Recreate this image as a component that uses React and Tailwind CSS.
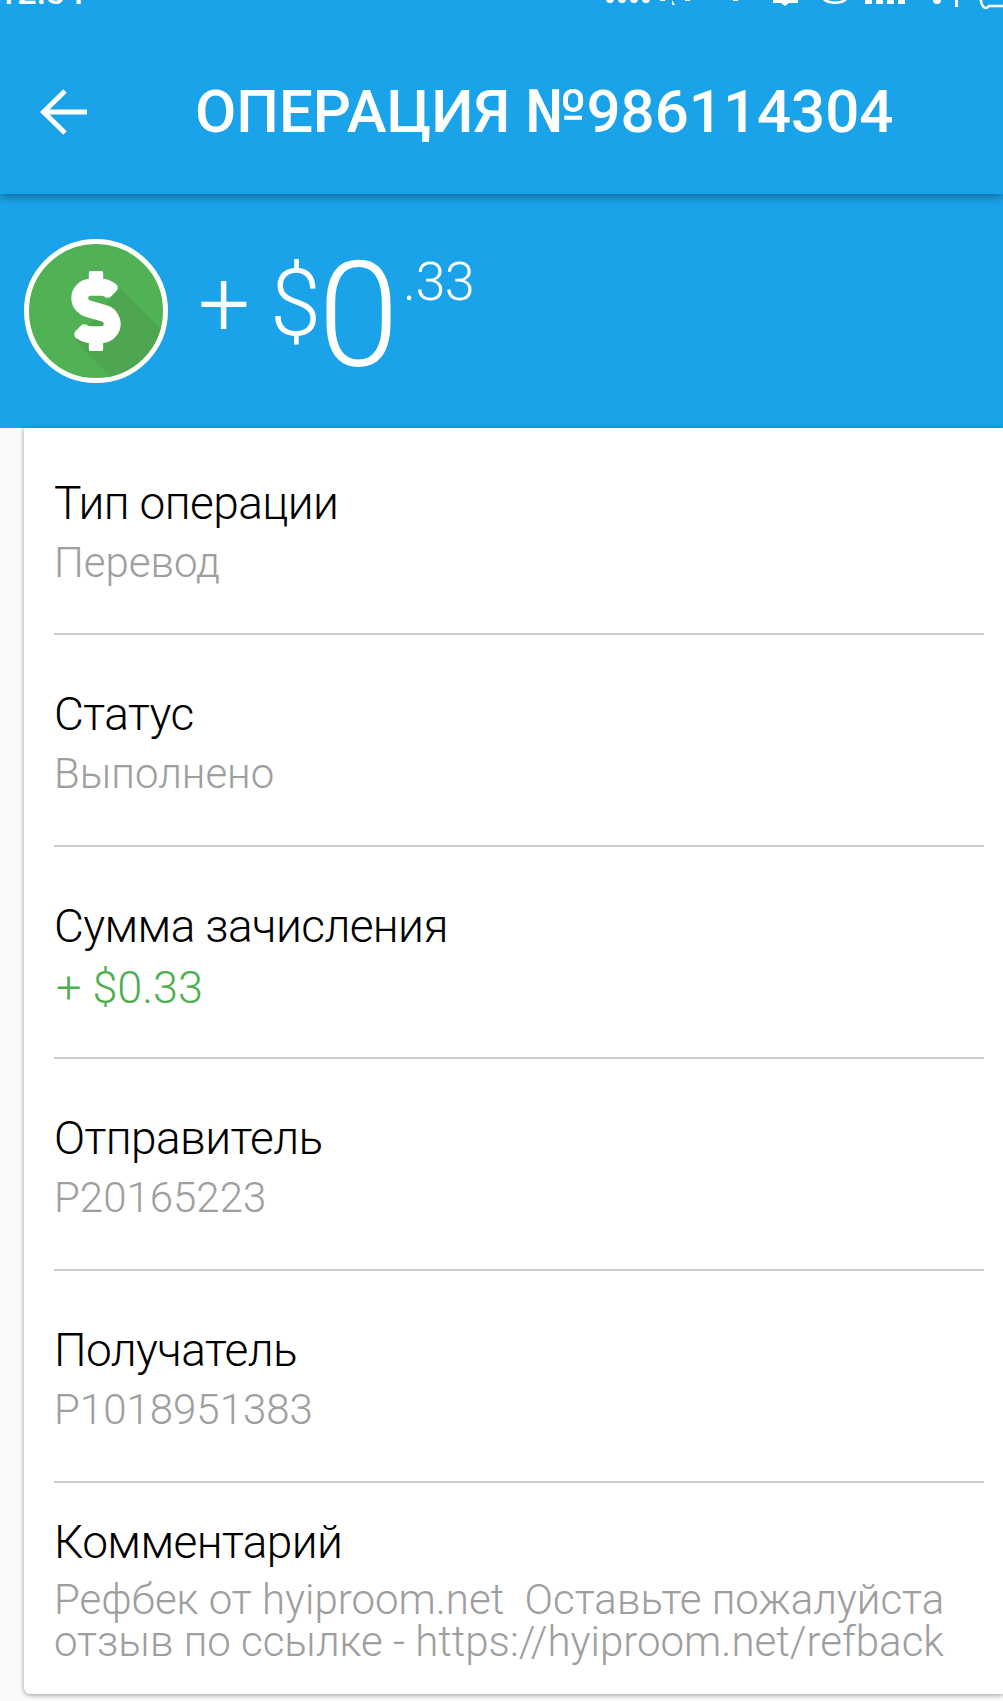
import { FaDollarSign } from 'react-icons/fa';

const rows = [
  { label: 'Тип операции', value: 'Перевод' },
  { label: 'Статус', value: 'Выполнено' },
  { label: 'Сумма зачисления', value: '+ $0.33', green: true },
  { label: 'Отправитель', value: 'P20165223' },
  { label: 'Получатель', value: 'P1018951383' },
];

// phone status bar, cut off by the top of the screenshot
function StatusBar() {
  return (
    <div className="absolute inset-x-0 top-0 flex h-[10px] overflow-hidden text-white">
      <span className="mt-[-25px] ml-[-2px] text-[34px] leading-[34px] font-medium">12:54</span>
      <svg className="absolute top-0 left-[600px]" width="403" height="10" viewBox="0 0 403 10" fill="white">
        <circle cx="10" cy="-1" r="4" />
        <circle cx="22" cy="-1" r="4" />
        <circle cx="34" cy="-1" r="4" />
        <circle cx="46" cy="-1" r="4" />
        <path d="M60 -2h5v3h-5zM72 0l3 5h-3zM85 -2h5v3h-5zM97 -2h5v2h-5zM109 -2h18v2h-18zM133 -2h5v3h-5zM150 -2h5v2h-5z" />
        <path d="M173 0h25v3h-25zM181 3h8l-4 3z" />
        <path d="M222 -3a14 9 0 0 0 26 0" fill="none" stroke="white" strokeWidth="2.500" />
        <path d="M265 -2h7v6h-7zM276 -2h7v6h-7zM287 -2h7v6h-7zM298 -2h7v6h-7z" />
        <circle cx="337" cy="0" r="4" />
        <path d="M355 -2h3v9h-3z" />
        <path d="M381 -3a5 9 0 0 0 8 9h14" fill="none" stroke="white" strokeWidth="2.500" />
      </svg>
    </div>
  );
}

function DollarBadge() {
  return (
    <div className="relative h-[144px] w-[144px] shrink-0 overflow-hidden rounded-full border-[5px] border-white bg-[#50b155]">
      <svg className="absolute inset-0" width="134" height="134" viewBox="0 0 134 134">
        <path d="M91 44 L134 87 L134 134 L82 134 L47 97 Z" fill="#4ea651" />
      </svg>
      <FaDollarSign className="absolute top-[27px] left-[27px] text-white" size={80} stroke="white" strokeWidth={28} />
    </div>
  );
}

export default function App() {
  return (
    <div className="h-[1701px] w-[1003px] overflow-hidden bg-[#fafafa] font-['Roboto',sans-serif]">
      <header className="relative z-10 h-[194px] bg-[#1aa3e8] shadow-[0_3px_8px_rgba(0,0,0,0.35)]">
        <StatusBar />
        <div className="flex h-full items-center pt-[30px]">
          <svg className="ml-[40px] shrink-0" width="47" height="50" viewBox="0 0 47 50" fill="none" stroke="white" strokeWidth="5">
            <path d="M47 25H4M25 4L3.500 25L25 46" />
          </svg>
          <h1 className="ml-[108px] text-[60px] leading-none font-medium whitespace-nowrap text-white">ОПЕРАЦИЯ №986114304</h1>
        </div>
      </header>
      <section className="flex h-[234px] items-start bg-[#1aa3e8] pt-[45px] pl-[24px] text-white">
        <DollarBadge />
        <div className="ml-[30px] flex items-start font-light">
          <span className="mt-[20px] text-[92px] leading-none">+</span>
          <span className="mt-[19px] ml-[20px] text-[92px] leading-none">$</span>
          <span className="mt-[5px] ml-[-3px] text-[146px] leading-none">0</span>
          <span className="mt-[16px] ml-[4px] text-[54px] leading-none tracking-[-0.5px]">.33</span>
        </div>
      </section>
      <main className="ml-[24px] h-[1266px] rounded-bl-[6px] bg-white pl-[30px] shadow-[0_1px_5px_rgba(0,0,0,0.4)]">
        {rows.map((row) => (
          <div key={row.label} className="mr-[19px] h-[212px] border-b-2 border-[#cccccc] pt-[53px] first:h-[207px] first:pt-[49px]">
            <div className="text-[46px] leading-[52px] font-light tracking-[-0.6px] text-black">{row.label}</div>
            {row.green ? (
              <div className="mt-[10px] ml-[2px] text-[45px] leading-[52px] font-light text-[#4caf50]">{row.value}</div>
            ) : (
              <div className="mt-[8px] text-[42px] leading-[52px] font-light text-[#9e9e9e]">{row.value}</div>
            )}
          </div>
        ))}
        <div className="mr-[19px] pt-[33px]">
          <div className="text-[46px] leading-[52px] font-light tracking-[-0.6px] text-black">Комментарий</div>
          <div className="mt-[11px] text-[42px] leading-[42px] font-light whitespace-pre text-[#9e9e9e]">
            {'Рефбек от hyiproom.net  Оставьте пожалуйста\nотзыв по ссылке - https://hyiproom.net/refback'}
          </div>
        </div>
      </main>
    </div>
  );
}
